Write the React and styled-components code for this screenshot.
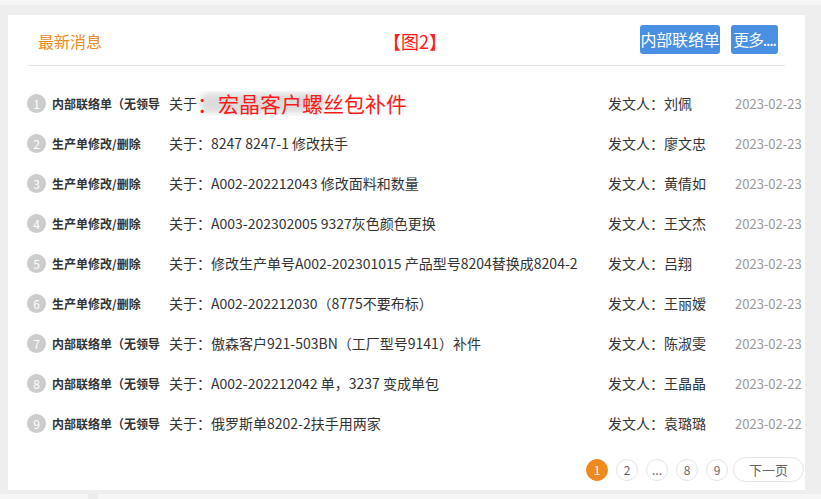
import styled, { createGlobalStyle } from "styled-components"

const GlobalStyle = createGlobalStyle`
  html, body {
    margin: 0;
    padding: 0;
    background: #eeeeee;
    font-family: "Noto Sans CJK SC", "Noto Sans", sans-serif;
  }
`

const messages = [
  { type: "内部联络单（无领导审批）", title: "宏晶客户螺丝包补件", who: "刘佩", date: "2023-02-23", hot: true },
  { type: "生产单修改/删除", title: "8247 8247-1 修改扶手", who: "廖文忠", date: "2023-02-23" },
  { type: "生产单修改/删除", title: "A002-202212043 修改面料和数量", who: "黄倩如", date: "2023-02-23" },
  { type: "生产单修改/删除", title: "A003-202302005 9327灰色颜色更换", who: "王文杰", date: "2023-02-23" },
  { type: "生产单修改/删除", title: "修改生产单号A002-202301015 产品型号8204替换成8204-2", who: "吕翔", date: "2023-02-23" },
  { type: "生产单修改/删除", title: "A002-202212030（8775不要布标）", who: "王丽嫒", date: "2023-02-23" },
  { type: "内部联络单（无领导审批）", title: "傲森客户921-503BN（工厂型号9141）补件", who: "陈淑雯", date: "2023-02-23" },
  { type: "内部联络单（无领导审批）", title: "A002-202212042 单，3237 变成单包", who: "王晶晶", date: "2023-02-22" },
  { type: "内部联络单（无领导审批）", title: "俄罗斯单8202-2扶手用两家", who: "袁璐璐", date: "2023-02-22" },
]

const App = () => {
  return (
    <Page>
      <GlobalStyle />
      <TopStrip />
      <Body>
        <Card>
          <Header>
            <SectionName>最新消息</SectionName>
            <FigureTag>【图2】</FigureTag>
            <Actions>
              <BlueButton type="button" $w={80}>内部联络单</BlueButton>
              <BlueButton type="button" $w={47} $tight>更多....</BlueButton>
            </Actions>
          </Header>
          <Divider />
          <List>
            {messages.map((m, i) => (
              <Row key={i}>
                <Num>{i + 1}</Num>
                <TypeLabel>{m.type}</TypeLabel>
                <About>
                  关于
                  {m.hot ? (
                    <HotTitle>
                      <Smear />
                      <HotText>：宏晶客户螺丝包补件</HotText>
                    </HotTitle>
                  ) : (
                    <>：{m.title}</>
                  )}
                </About>
                <Sender>发文人：{m.who}</Sender>
                <DateText>{m.date}</DateText>
              </Row>
            ))}
          </List>
          <Pager>
            <PageDot $active>1</PageDot>
            <PageDot>2</PageDot>
            <PageDot>...</PageDot>
            <PageDot>8</PageDot>
            <PageDot>9</PageDot>
            <NextBtn type="button">下一页</NextBtn>
          </Pager>
        </Card>
      </Body>
      <BottomStrip>
        <Nub />
      </BottomStrip>
    </Page>
  )
}
export default App

const Page = styled.div`
  width: 821px;
  height: 499px;
  overflow: hidden;
  background: #eeeeee;
`

const TopStrip = styled.div`
  height: 5px;
  background: #f6f6f6;
`

const Body = styled.div`
  padding: 10px 16px 4px 8px;
`

const Card = styled.div`
  background: #fff;
  height: 475px;
  overflow: hidden;
`

const Header = styled.div`
  height: 50px;
  display: flex;
  align-items: center;
  padding: 0 27px 0 30px;
`

const SectionName = styled.div`
  color: #ef8a1e;
  font-size: 16px;
  line-height: 20px;
  padding-top: 1px;
`

const FigureTag = styled.div`
  color: #ff1a1a;
  font-size: 18px;
  line-height: 22px;
  margin-left: 281px;
  padding-top: 2px;
`

const Actions = styled.div`
  margin-left: auto;
  display: flex;
  gap: 11px;
  padding-bottom: 2px;
`

const BlueButton = styled.button`
  width: ${p => p.$w}px;
  height: 29px;
  padding: 0;
  border: none;
  border-radius: 3px;
  background: #4a90e2;
  color: #fff;
  font-family: inherit;
  font-size: 16px;
  letter-spacing: ${p => (p.$tight ? "-1.2px" : "-0.2px")};
  white-space: nowrap;
  overflow: hidden;
  cursor: pointer;
`

const Divider = styled.div`
  height: 1px;
  margin: 0 20px;
  background: #e5e5e5;
`

const List = styled.div`
  padding-top: 17px;
`

const Row = styled.div`
  height: 40px;
  display: grid;
  grid-template-columns: 25px 117px 439px 127px 70px;
  align-items: center;
  padding-left: 19px;
  color: #333;
  white-space: nowrap;
`

const Num = styled.span`
  width: 19px;
  height: 19px;
  border-radius: 50%;
  background: #cccccc;
  color: #fff;
  font-size: 12px;
  line-height: 19px;
  text-align: center;
`

const TypeLabel = styled.span`
  font-size: 12px;
  font-weight: 700;
  overflow: hidden;
  width: 108px;
`

const About = styled.span`
  font-size: 14px;
  overflow: hidden;
  display: flex;
  align-items: center;
`

const HotTitle = styled.span`
  position: relative;
  display: inline-block;
`

const Smear = styled.span`
  position: absolute;
  left: 4px;
  top: 2px;
  width: 124px;
  height: 20px;
  background: #dcdcdc;
  filter: blur(3px);
  border-radius: 6px;
`

const HotText = styled.span`
  position: relative;
  color: #ff1a1a;
  font-size: 21px;
  line-height: 24px;
`

const Sender = styled.span`
  font-size: 14px;
`

const DateText = styled.span`
  font-size: 13px;
  color: #999;
`

const Pager = styled.div`
  display: flex;
  justify-content: flex-end;
  align-items: center;
  gap: 8px;
  margin-top: 14px;
  margin-right: 1px;
`

const PageDot = styled.span`
  width: 22px;
  height: 22px;
  box-sizing: border-box;
  border-radius: 50%;
  border: 1px solid ${p => (p.$active ? "#ef8a1e" : "#e5e5e5")};
  background: ${p => (p.$active ? "#ef8a1e" : "#fff")};
  color: ${p => (p.$active ? "#fff" : "#666")};
  font-size: 12px;
  line-height: 20px;
  text-align: center;
`

const NextBtn = styled.button`
  width: 71px;
  height: 25px;
  margin-left: -3px;
  border: 1px solid #e5e5e5;
  border-radius: 13px;
  background: #fff;
  color: #666;
  font-family: inherit;
  font-size: 13px;
  padding: 0;
`

const BottomStrip = styled.div`
  height: 5px;
  background: #f6f6f6;
  padding-left: 88px;
`

const Nub = styled.div`
  width: 10px;
  height: 5px;
  background: #ececec;
`
